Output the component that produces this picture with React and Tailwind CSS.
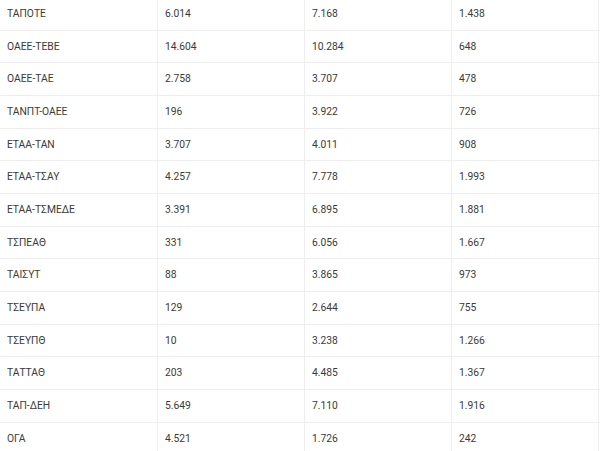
const rows = [
  ["ΤΑΠΟΤΕ", "6.014", "7.168", "1.438"],
  ["ΟΑΕΕ-ΤΕΒΕ", "14.604", "10.284", "648"],
  ["ΟΑΕΕ-ΤΑΕ", "2.758", "3.707", "478"],
  ["ΤΑΝΠΤ-ΟΑΕΕ", "196", "3.922", "726"],
  ["ΕΤΑΑ-ΤΑΝ", "3.707", "4.011", "908"],
  ["ΕΤΑΑ-ΤΣΑΥ", "4.257", "7.778", "1.993"],
  ["ΕΤΑΑ-ΤΣΜΕΔΕ", "3.391", "6.895", "1.881"],
  ["ΤΣΠΕΑΘ", "331", "6.056", "1.667"],
  ["ΤΑΙΣΥΤ", "88", "3.865", "973"],
  ["ΤΣΕΥΠΑ", "129", "2.644", "755"],
  ["ΤΣΕΥΠΘ", "10", "3.238", "1.266"],
  ["ΤΑΤΤΑΘ", "203", "4.485", "1.367"],
  ["ΤΑΠ-ΔΕΗ", "5.649", "7.110", "1.916"],
  ["ΟΓΑ", "4.521", "1.726", "242"],
];

const App = () => {
  return (
    <div className="w-[600px] h-[451px] overflow-hidden bg-white">
      <div
        className="-mt-[2px] text-[10.3px] text-[#3a3a3a]"
        style={{ fontFamily: "Roboto, 'Liberation Sans', sans-serif" }}
      >
        {rows.map((row) => (
          <div key={row[0]} className="flex h-[32.67px] border-b border-[#eeeeee]">
            <div className="w-[157px] pl-[7px] flex items-center">{row[0]}</div>
            <div className="w-[147px] border-l border-[#eeeeee] pl-[7px] flex items-center">{row[1]}</div>
            <div className="w-[147px] border-l border-[#eeeeee] pl-[7px] flex items-center">{row[2]}</div>
            <div className="w-[148px] border-x border-[#eeeeee] pl-[7px] flex items-center">{row[3]}</div>
          </div>
        ))}
      </div>
    </div>
  );
};

export default App;
